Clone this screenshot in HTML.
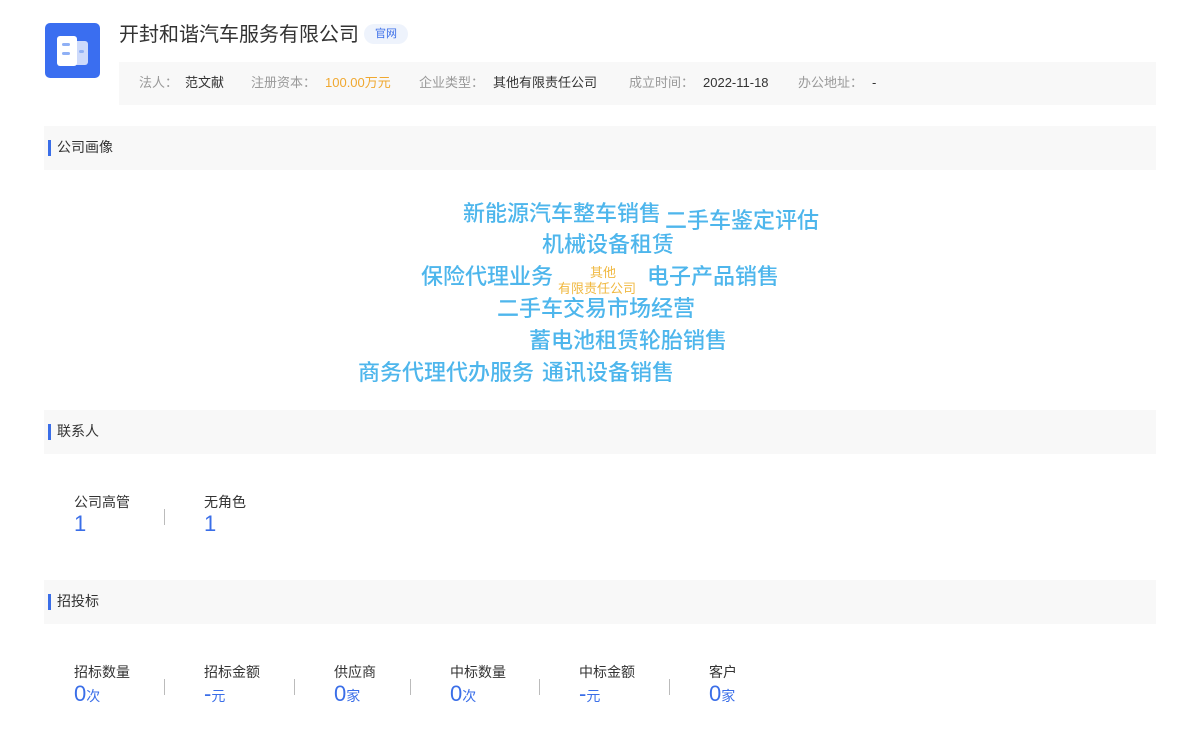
<!DOCTYPE html>
<html><head><meta charset="utf-8"><style>
*{margin:0;padding:0;box-sizing:border-box}
body{width:1200px;height:752px;background:#fff;font-family:"Liberation Sans","Noto Sans CJK SC",sans-serif;position:relative;overflow:hidden;color:#333}
.a{position:absolute;white-space:nowrap}
.bar{position:absolute;left:44px;width:1112px;height:44px;background:#f8f8f8}
.bar i{position:absolute;left:4px;top:14px;width:3px;height:16px;background:#3a6ee8}
.bar span{position:absolute;left:13px;top:11px;font-size:14px;color:#333}
.w{position:absolute;white-space:nowrap;font-size:22px;line-height:22px;color:#4eb6ec;font-weight:500}
.lbl{position:absolute;font-size:14px;color:#333;white-space:nowrap}
.num{position:absolute;font-size:22px;color:#3a6ee8;white-space:nowrap;line-height:22px}
.num small{font-size:14px}
.sep{position:absolute;width:1px;height:16px;background:#bbb}
</style></head><body>
<div class="a" style="left:45px;top:23px;width:55px;height:55px;background:#3a6ef0;border-radius:5px">
<svg width="55" height="55" viewBox="0 0 55 55"><rect x="12" y="13" width="20" height="30" rx="3" fill="#fff"/><rect x="27" y="18" width="16" height="24" rx="3" fill="#fff" opacity=".75"/><rect x="17" y="20" width="8" height="3" rx="1.5" fill="#8fb0f5"/><rect x="17" y="29" width="8" height="3" rx="1.5" fill="#8fb0f5"/><rect x="34" y="27" width="5" height="3" rx="1.5" fill="#8fb0f5"/></svg></div>
<div class="a" style="left:119px;top:18px;font-size:20px;color:#333">开封和谐汽车服务有限公司</div>
<div class="a" style="left:364px;top:24px;width:44px;height:20px;border-radius:10px;background:#eef3fc;color:#3a6ee8;font-size:11px;line-height:20px;text-align:center">官网</div>
<div class="a" style="left:119px;top:62px;width:1037px;height:43px;background:#f8f8f8;font-size:13px;line-height:41px;color:#999">
<span style="position:absolute;left:20px">法人：</span><span style="position:absolute;left:66px;color:#333">范文献</span>
<span style="position:absolute;left:132px">注册资本：</span><span style="position:absolute;left:206px;color:#f0a830">100.00万元</span>
<span style="position:absolute;left:300px">企业类型：</span><span style="position:absolute;left:374px;color:#333">其他有限责任公司</span>
<span style="position:absolute;left:510px">成立时间：</span><span style="position:absolute;left:584px;color:#333">2022-11-18</span>
<span style="position:absolute;left:679px">办公地址：</span><span style="position:absolute;left:753px;color:#333">-</span></div>

<div class="bar" style="top:126px"><i></i><span>公司画像</span></div>
<div class="w" style="left:463px;top:203px">新能源汽车整车销售</div>
<div class="w" style="left:665px;top:210px">二手车鉴定评估</div>
<div class="w" style="left:542px;top:234px">机械设备租赁</div>
<div class="w" style="left:421px;top:266px">保险代理业务</div>
<div class="a" style="left:590px;top:262px;font-size:13px;color:#f0b840">其他</div>
<div class="a" style="left:558px;top:278px;font-size:13px;color:#f0b840">有限责任公司</div>
<div class="w" style="left:647px;top:266px">电子产品销售</div>
<div class="w" style="left:497px;top:298px">二手车交易市场经营</div>
<div class="w" style="left:529px;top:330px">蓄电池租赁轮胎销售</div>
<div class="w" style="left:358px;top:362px">商务代理代办服务</div>
<div class="w" style="left:542px;top:362px">通讯设备销售</div>

<div class="bar" style="top:410px"><i></i><span>联系人</span></div>
<div class="lbl" style="left:74px;top:492px">公司高管</div><div class="num" style="left:74px;top:513px">1</div>
<div class="sep" style="left:164px;top:509px"></div>
<div class="lbl" style="left:204px;top:492px">无角色</div><div class="num" style="left:204px;top:513px">1</div>

<div class="bar" style="top:580px"><i></i><span>招投标</span></div>
<div class="lbl" style="left:74px;top:662px">招标数量</div><div class="num" style="left:74px;top:683px">0<small>次</small></div>
<div class="sep" style="left:164px;top:679px"></div>
<div class="lbl" style="left:204px;top:662px">招标金额</div><div class="num" style="left:204px;top:683px">-<small>元</small></div>
<div class="sep" style="left:294px;top:679px"></div>
<div class="lbl" style="left:334px;top:662px">供应商</div><div class="num" style="left:334px;top:683px">0<small>家</small></div>
<div class="sep" style="left:410px;top:679px"></div>
<div class="lbl" style="left:450px;top:662px">中标数量</div><div class="num" style="left:450px;top:683px">0<small>次</small></div>
<div class="sep" style="left:539px;top:679px"></div>
<div class="lbl" style="left:579px;top:662px">中标金额</div><div class="num" style="left:579px;top:683px">-<small>元</small></div>
<div class="sep" style="left:669px;top:679px"></div>
<div class="lbl" style="left:709px;top:662px">客户</div><div class="num" style="left:709px;top:683px">0<small>家</small></div>
</body></html>
